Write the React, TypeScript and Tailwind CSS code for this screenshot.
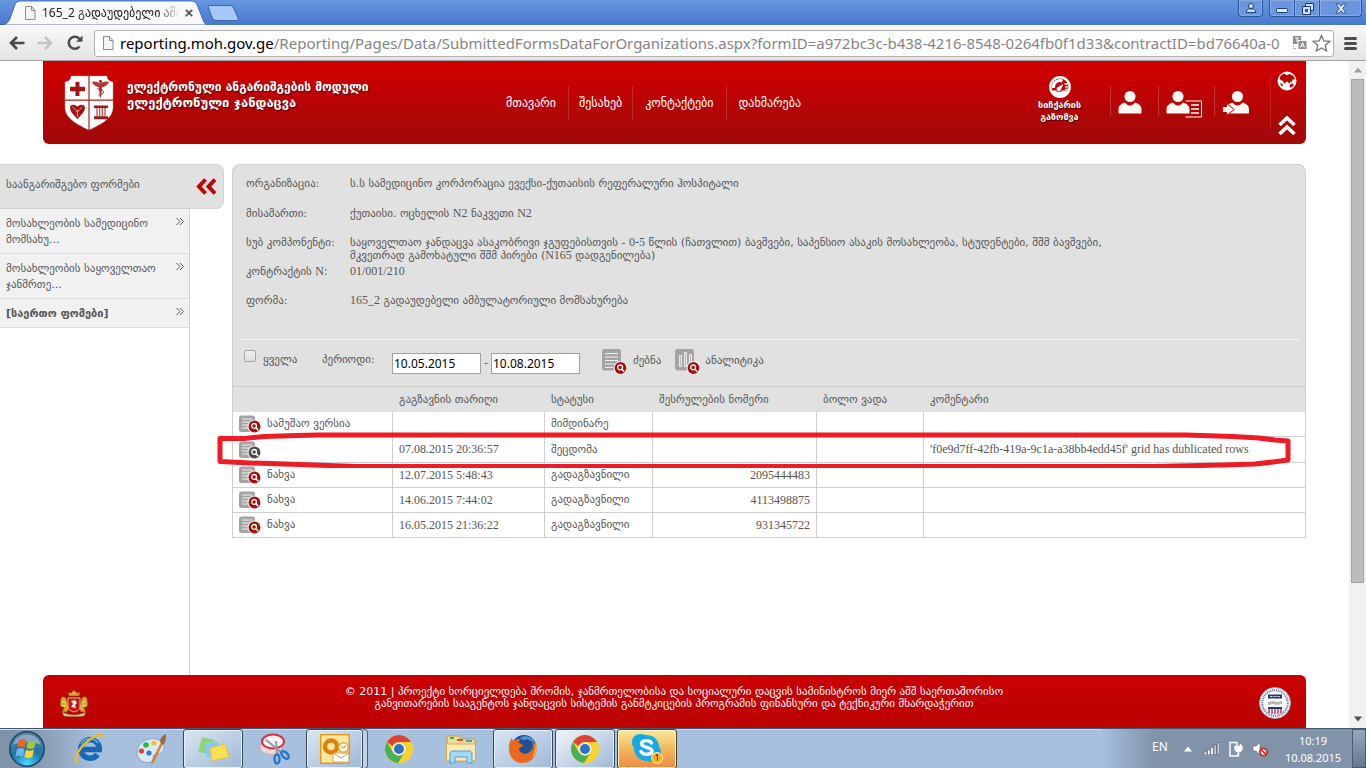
import type { ReactNode } from "react";

/* Latin and numeric runs use the serif face, Georgian uses the sans face. */
function Latin({ children }: { children: ReactNode }) {
  return <span className="font-['Liberation_Serif',serif] text-[12px]">{children}</span>;
}

function PageIcon() {
  return (
    <svg className="h-4 w-3 shrink-0" viewBox="0 0 12 16">
      <path d="M1.5 1.5h6l3.5 4v9H1.5z" fill="#f4f4f4" stroke="#8c8c8c" />
      <path d="M7.5 1.5v4H11" fill="none" stroke="#8c8c8c" />
    </svg>
  );
}

function WindowButtons() {
  const box = "flex h-[17px] items-center justify-center border-x border-b border-[#2f5597] bg-[#6a97dd] shadow-[inset_0_0_0_1px_#86abe4]";
  return (
    <div className="flex self-start">
      <button aria-label="User" className={`${box} mr-1.5 w-[25px] rounded-b`}>
        <svg className="h-3 w-3" viewBox="0 0 12 12" fill="#cfe0f8" stroke="#1f3b6d">
          <path d="M1.5 10.5v-2l2-1.5h5l2 1.500v2z" />
          <circle cx="6" cy="4" r="2.500" />
        </svg>
      </button>
      <button aria-label="Minimize" className={`${box} w-[26px] rounded-bl`}>
        <svg className="h-3 w-3" viewBox="0 0 12 12">
          <rect x="0.5" y="6.500" width="11" height="4" rx="1" fill="#dbe8fa" stroke="#1f3b6d" />
        </svg>
      </button>
      <button aria-label="Restore" className={`${box} w-[25px] border-l-0`}>
        <svg className="h-[13px] w-[13px]" viewBox="0 0 13 13" fill="#cfe0f8" stroke="#1f3b6d">
          <path d="M4.500 1.500h8v7h-8z" />
          <path d="M1.500 4.500h8v8h-8z" />
          <path d="M4.500 7.500h2v2h-2z" fill="#6a97dd" />
        </svg>
      </button>
      <button aria-label="Close" className={`${box} w-[42px] rounded-br border-l-0`}>
        <svg className="h-[11px] w-3" viewBox="0 0 12 11">
          <path d="M1 .8h3l2 2.500 2-2.500h3L7.800 5.500 11 10.200H8L6 7.700l-2 2.500H1l3.200-4.700z" fill="#dbe8fa" stroke="#1f3b6d" strokeWidth=".8" />
        </svg>
      </button>
    </div>
  );
}

function BrowserChrome() {
  return (
    <header className="shrink-0">
      <div className="flex h-[25px] items-end bg-linear-to-b from-[#6797e0] to-[#4878cd] pr-1">
        <div className="relative h-[25px] w-[207px] shrink-0">
          <svg className="absolute inset-0 h-full w-full" viewBox="0 0 210 25" preserveAspectRatio="none">
            <path d="M0 25c6 0 8-2 10-6l5-14c1.500-3 3-4 6-4h173c3 0 4.500 1 6 4l6 15c1 3 2 4 4 5z" fill="#f9f9f9" stroke="#35599d" strokeWidth=".8" />
          </svg>
          <div className="relative flex h-full items-center gap-1.5 pr-3.5 pl-6">
            <PageIcon />
            <span className="w-[137px] overflow-hidden font-['Noto_Sans','DejaVu_Sans',sans-serif] text-[12px] whitespace-nowrap text-[#222] [mask-image:linear-gradient(to_right,black_85%,transparent)]">
              165_2 გადაუდებელი ამბულატორიული
            </span>
            <button aria-label="Close tab" className="ml-auto">
              <svg className="h-2 w-2" viewBox="0 0 8 8" stroke="#555" strokeWidth="1.800">
                <path d="M.8.8l6.400 6.400M7.200.8L.8 7.200" />
              </svg>
            </button>
          </div>
        </div>
        <button aria-label="New tab" className="mb-1 flex">
          <svg className="h-4 w-[32px]" viewBox="0 0 31 16" preserveAspectRatio="none">
            <path d="M1 1.500C1 .8 2 .5 3 .5h19c2 0 3 .5 3.800 2l4.500 11c.4 1.200 0 2-1.300 2H9c-2 0-3-.5-3.800-2z" fill="#a6c8f6" stroke="#3b66ae" />
          </svg>
        </button>
        <div className="flex-1" />
        <WindowButtons />
      </div>
      <div className="flex h-9 items-center border-t border-b border-t-[#fbfbfb] border-b-[#a3a3a3] bg-linear-to-b from-[#f8f8f8] to-[#e4e4e4] px-[9px]">
        <button aria-label="Back" className="w-7">
          <svg className="h-3.5 w-4" viewBox="0 0 16 14" fill="none" stroke="#484848" strokeWidth="2.600">
            <path d="M8 1L2 7l6 6M2 7h13.500" />
          </svg>
        </button>
        <button aria-label="Forward" className="w-[30px]">
          <svg className="h-3.5 w-4" viewBox="0 0 16 14" fill="none" stroke="#c4c4c4" strokeWidth="2.600">
            <path d="M8 1l6 6-6 6M14 7H.5" />
          </svg>
        </button>
        <button aria-label="Reload" className="w-[27px]">
          <svg className="h-4 w-4" viewBox="0 0 16 16">
            <path d="M12.500 11.500a6 6 0 1 1 0-7.500" fill="none" stroke="#4d4d4d" strokeWidth="2.600" />
            <path d="M9 6.800h6.500V.5z" fill="#4d4d4d" />
          </svg>
        </button>
        <div className="flex h-[27px] min-w-0 flex-1 items-center gap-1.5 rounded-[3px] border border-[#b1b1b1] bg-white pr-0.5 pl-[7px]">
          <PageIcon />
          <div role="textbox" aria-label="Address" className="min-w-0 flex-1 overflow-hidden font-['Noto_Sans',sans-serif] text-[15px] leading-5 whitespace-nowrap text-[#858585]">
            <span className="text-black">reporting.moh.gov.ge</span>
            /Reporting/Pages/Data/SubmittedFormsDataForOrganizations.aspx?formID=a972bc3c-b438-4216-8548-0264fb0f1d33&amp;contractID=bd76640a-0
          </div>
          <div className="flex items-center gap-1">
            <button aria-label="Translate">
              <svg className="h-4 w-4" viewBox="0 0 16 16">
                <path d="M1 1h8v8H1z" fill="#8e8e8e" />
                <path d="M3 3h4M5 3v4" stroke="#fff" />
                <path d="M6 5.500h9v9H6z" fill="#8e8e8e" stroke="#fff" />
                <path d="M8.500 12.500l2-5 2 5M9.200 11h2.600" stroke="#fff" fill="none" />
                <path d="M1.500 11v2.500H4" stroke="#8e8e8e" fill="none" strokeDasharray="1 1" />
              </svg>
            </button>
            <button aria-label="Bookmark">
              <svg className="h-[19px] w-[19px]" viewBox="0 0 19 19">
                <path d="M9.500 1.500l2.300 5.400 5.900.5-4.500 3.800 1.400 5.800-5.100-3.100L4.400 17l1.400-5.800L1.300 7.400l5.900-.5z" fill="#fff" stroke="#777" strokeWidth="1.300" />
              </svg>
            </button>
          </div>
        </div>
        <button aria-label="Menu" className="ml-2.5 flex flex-col gap-0.5">
          <span className="h-[3px] w-[13px] rounded-sm bg-[#4d4d4d]" />
          <span className="h-[3px] w-[13px] rounded-sm bg-[#4d4d4d]" />
          <span className="h-[3px] w-[13px] rounded-sm bg-[#4d4d4d]" />
        </button>
      </div>
    </header>
  );
}

function Shield() {
  return (
    <svg className="h-[56px] w-[50px]" viewBox="0 0 50 57" preserveAspectRatio="none">
      <path d="M7 1h36c0 3.500 2 5.500 6 6v26c0 11-12 17-24 23C13 50 1 44 1 33V7c4-.5 6-2.500 6-6z" fill="#fff" stroke="#9b9b9b" strokeOpacity=".5" />
      <path d="M25 1v55M1 25.500h48" stroke="#b02020" strokeWidth="1.200" />
      <path d="M11.500 7h4v5h5.500v4.500h-5.500v5h-4v-5H6V12h5.500z" fill="#a31515" />
      <path d="M28 7c3-1 6 0 8 1.500C38.500 7 41.500 6 45 7c-1.500 3.500-4.500 5-6.800 5.500L37 23h-1l-1.200-10.500C32.500 12 29.500 10.500 28 7z" fill="#b23a3a" />
      <path d="M33.500 13.500c1.500 2.500 6 1.500 6 4s-5 1.500-4.500 3.500" fill="none" stroke="#a31515" />
      <circle cx="36.500" cy="6.500" r="1.500" fill="#a31515" />
      <path d="M6 33c0-3 4.500-3.500 7.500-1 3-2.500 7.500-2 7.500 1 0 4-4 8-7.500 12C10 41 6 37 6 33z" fill="#a31515" />
      <path d="M8.500 32l5 6 5-6M13.500 35v8" fill="none" stroke="#e8b9b9" strokeWidth=".7" />
      <path d="M30 31h14v2.500H30zM30 42h14v3H30z" fill="#a31515" />
      <path d="M33 33.500v9M35.700 33.500v9M38.300 33.500v9M41 33.500v9" stroke="#b84040" strokeWidth="1.200" />
    </svg>
  );
}

function Person() {
  return (
    <>
      <circle cx="12" cy="5.500" r="5.500" fill="#fff9f5" />
      <path d="M.5 22.500v-4c0-4 3-6 6.500-7 1.500 2 3 3 5 3s3.500-1 5-3c3.500 1 6.500 3 6.500 7v4z" fill="#fff9f5" />
    </>
  );
}

const navLink = "flex h-[34px] items-center border-r border-white/15";
const shadow = "[text-shadow:1px_1px_1px_rgba(0,0,0,0.6)]";

function SiteHeader() {
  return (
    <header className="mx-[43px] flex h-[83px] shrink-0 rounded-b-md bg-linear-to-b from-[#cb0000] from-15% to-[#a40808] to-90% pl-[21px] text-white">
      <div className="pt-3.5">
        <Shield />
      </div>
      <div className={`w-[380px] pt-[19px] pl-[13px] text-[12px] leading-[15px] font-bold ${shadow}`}>
        <h1>ელექტრონული ანგარიშგების მოდული</h1>
        <p className="text-[13px]">ელექტრონული ჯანდაცვა</p>
      </div>
      <nav className="flex items-center text-[12px]">
        <a href="#main" className={`${navLink} px-3`}>მთავარი</a>
        <a href="#about" className={`${navLink} px-2.5`}>შესახებ</a>
        <a href="#contacts" className={`${navLink} px-3`}>კონტაქტები</a>
        <a href="#help" className="flex h-[34px] items-center px-3">დახმარება</a>
      </nav>
      <div className="flex flex-1 justify-end">
        <a href="#speed" className={`mt-[15px] mr-[29px] flex flex-col items-center text-center text-[9px] leading-[12px] font-bold ${shadow}`}>
          <svg className="mb-px h-[22px] w-[22px]" viewBox="0 0 22 22">
            <circle cx="11" cy="11" r="9.700" fill="#b90707" stroke="#fff" strokeWidth="2.400" />
            <path d="M4.500 12a6.500 6.500 0 0 1 9-7" fill="none" stroke="#fff" strokeWidth="3" />
            <path d="M15.500 8h3.500M16 10.800h3.500M16 13.500h3" stroke="#fff" strokeWidth="1.300" />
            <path d="M14.500 8l-3 6.500a2.200 2.200 0 1 1-3.200-3z" fill="#fff" />
            <path d="M2 14.500h5c1 2 5 2 6 0h7c-1.500 4.500-5 6.500-9 6.500s-7.500-2-9-6.500z" fill="#fff" />
          </svg>
          <span>სიჩქარის</span>
          <span>გაზომვა</span>
        </a>
        <div className="mt-[25px] flex h-[30px] text-white">
          <a href="#user" aria-label="User" className="flex h-full w-12 items-end border-l border-white/20 pb-[2px] pl-[7px]">
            <svg className="h-[23px] w-6" viewBox="0 0 24 23"><Person /></svg>
          </a>
          <a href="#profile" aria-label="Profile" className="flex h-full w-14 items-end border-l border-white/20 pl-[7px]">
            <svg className="-mb-0.5 h-[27px] w-9" viewBox="0 0 36 27">
              <Person />
              <path d="M19 9.500h17v17H19.500l6-4v-9z" fill="#ae0606" />
              <path d="M19.500 10h16v16h-16" fill="none" stroke="#fff9f5" />
              <path d="M25 14h8M25 18h8M25 22h8" stroke="#fff9f5" strokeWidth="1.300" />
            </svg>
          </a>
          <a href="#logout" aria-label="Log out" className="flex h-full w-14 items-end border-l border-white/20 pl-[7px]">
            <svg className="h-[25px] w-7" viewBox="0 0 28 25">
              <g transform="translate(3.500 0)"><Person /></g>
              <path d="M.7 15.500h4v-3.200l7.500 6.200-7.500 6v-3h-4z" fill="#fff9f5" stroke="#ae0606" />
            </svg>
          </a>
        </div>
        <div className="my-3.5 flex w-9 flex-col items-center justify-between border-l border-white/10 pr-1">
          <a href="#language" aria-label="Language" className="-mt-1">
            <svg className="h-5 w-5" viewBox="0 0 20 20">
              <circle cx="10" cy="10" r="9" fill="#fff" stroke="#fff" />
              <path d="M2.500 6.500L5 3.500l3-.7 1.500 1.500 3-1.300 4 2 1.500 3-2.500.8-.5 2.200-1.800-.5-.7 2.500-2-2.500-2 1-1.500 1.500-.8-3L3.500 9zM13 13.500l2.500-1 1.500 1.500-2.500 2.500-2-.5zM3 12l2.500 1 .5 2.500-2-1z" fill="#b80606" />
            </svg>
          </a>
          <button aria-label="Collapse header" className="-mb-[5px]">
            <svg className="h-5 w-[18px]" viewBox="0 0 18 20" fill="none" stroke="#fff" strokeWidth="3.600">
              <path d="M1.500 10L9 3l7.500 7M1.500 19L9 12l7.500 7" />
            </svg>
          </button>
        </div>
      </div>
    </header>
  );
}

const menuItems = [
  { text: "მოსახლეობის სამედიცინო მომსახუ...", bold: false },
  { text: "მოსახლეობის საყოველთაო ჯანმრთე...", bold: false },
  { text: "[საერთო ფომები]", bold: true },
];

function Sidebar() {
  return (
    <aside className="w-[224px] shrink-0">
      <div className="flex h-[45px] items-center justify-between rounded-r-lg border border-l-0 border-[#d2d2d2] bg-[#e1e1e1] pr-1.5 pb-0.5 pl-1.5">
        <span>საანგარიშგებო ფორმები</span>
        <button aria-label="Collapse menu" className="mt-0.5">
          <svg className="h-[17px] w-[22px]" viewBox="0 0 22 17" fill="none" stroke="#b80808" strokeWidth="4">
            <path d="M10.500 1.500L4 8.500l6.500 7M20 1.500l-6.500 7 6.500 7" />
          </svg>
        </button>
      </div>
      <ul className="w-[190px] border-r border-[#d0d0d0]">
        {menuItems.map((item) => (
          <li key={item.text} className="border-b border-[#dcdcdc] bg-[#f1f1f1]">
            <a href="#form" className="flex items-start justify-between pt-[7px] pr-[5px] pb-[5px] pl-1.5 leading-4">
              <span className={item.bold ? "font-bold" : "max-w-[160px]"}>{item.text}</span>
              <svg className="mt-px h-[9px] w-2" viewBox="0 0 8 9" fill="none" stroke="#555">
                <path d="M.5 1L4 4.500.5 8M4 1l3.500 3.500L4 8" />
              </svg>
            </a>
          </li>
        ))}
      </ul>
    </aside>
  );
}

function Magnifier({ color }: { color: string }) {
  return (
    <>
      <circle cx="6" cy="6" r="7" fill="#fff" fillOpacity=".85" />
      <circle cx="6" cy="6" r="5.900" fill={color} />
      <circle cx="5.600" cy="5.400" r="2.400" fill="none" stroke="#fff" strokeWidth="1.300" />
      <path d="M7.300 7.300l2.500 2.500" stroke="#fff" strokeWidth="1.600" />
    </>
  );
}

function RowIcon({ color }: { color: string }) {
  return (
    <svg className="h-[18px] w-[22px] shrink-0" viewBox="0 0 22 18">
      <rect y="0.5" width="16" height="16.500" rx="2.500" fill="#a4a4a4" />
      <path d="M3 4h10M3 7h8M3 10h6M3 13h6" stroke="#f0f0f0" strokeWidth="1.200" />
      <g transform="translate(9.500 5.500)"><Magnifier color={color} /></g>
    </svg>
  );
}

function SearchIcon() {
  return (
    <svg className="h-[25px] w-[25px]" viewBox="0 0 25 25">
      <rect width="19" height="21.500" rx="2.500" fill="#a4a4a4" />
      <path d="M3 4.500h13M3 8h13M3 11.500h13M3 15h9M3 18.500h8" stroke="#f0f0f0" strokeWidth="1.100" />
      <g transform="translate(12.500 13)"><Magnifier color="#a90d0d" /></g>
    </svg>
  );
}

function ChartIcon() {
  return (
    <svg className="h-[25px] w-[25px]" viewBox="0 0 25 25">
      <rect width="19" height="21.500" rx="2.500" fill="#a4a4a4" />
      <path d="M4.500 6.500h2v11h-2zM9.500 3.500h2v14h-2zM14.500 5.500h2v8h-2z" fill="#b8b8b8" stroke="#ececec" />
      <g transform="translate(12.500 13)"><Magnifier color="#a90d0d" /></g>
    </svg>
  );
}

const details: { label: ReactNode; value: ReactNode }[] = [
  { label: "ორგანიზაცია:", value: "ს.ს სამედიცინო კორპორაცია ევექსი-ქუთაისის რეფერალური ჰოსპიტალი" },
  { label: "მისამართი:", value: <>ქუთაისი. ოცხელის <Latin>N2</Latin> ნაკვეთი <Latin>N2</Latin></> },
  {
    label: "სუბ კომპონენტი:",
    value: (
      <>
        საყოველთაო ჯანდაცვა ასაკობრივი ჯგუფებისთვის - <Latin>0-5</Latin> წლის (ჩათვლით) ბავშვები, საპენსიო ასაკის
        მოსახლეობა, სტუდენტები, შშმ ბავშვები, მკვეთრად გამოხატული შშმ პირები (<Latin>N165</Latin> დადგენილება)
      </>
    ),
  },
  { label: <>კონტრაქტის <Latin>N:</Latin></>, value: <Latin>01/001/210</Latin> },
  { label: "ფორმა:", value: <><Latin>165_2</Latin> გადაუდებელი ამბულატორიული მომსახურება</> },
];

const rows = [
  { view: "სამუშაო ვერსია", date: "", status: "მიმდინარე", id: "", comment: "", failed: false },
  { view: "", date: "07.08.2015 20:36:57", status: "შეცდომა", id: "", comment: "'f0e9d7ff-42fb-419a-9c1a-a38bb4edd45f' grid has dublicated rows", failed: true },
  { view: "ნახვა", date: "12.07.2015 5:48:43", status: "გადაგზავნილი", id: "2095444483", comment: "", failed: false },
  { view: "ნახვა", date: "14.06.2015 7:44:02", status: "გადაგზავნილი", id: "4113498875", comment: "", failed: false },
  { view: "ნახვა", date: "16.05.2015 21:36:22", status: "გადაგზავნილი", id: "931345722", comment: "", failed: false },
];

const cell = "border-r border-[#cfcfcf] px-1.5 last:border-r-0";
const dateInput = "h-[21px] w-[89px] border border-[#a0a0a0] bg-white px-px font-['Noto_Sans',sans-serif] text-[12px] text-black";

function Panel() {
  return (
    <main className="min-w-0 flex-1">
      <section className="rounded-t-lg border border-b-0 border-[#cfcfcf] bg-[#e1e1e1] px-[5px]">
        <dl className="h-[174px] pt-[5px]">
          {details.map((d, i) => (
            <div key={i} className="flex h-[29px] items-baseline pt-2 pl-2 leading-3">
              <dt className="w-[104px] shrink-0 whitespace-nowrap">{d.label}</dt>
              <dd className="max-w-[800px]">{d.value}</dd>
            </div>
          ))}
        </dl>
        <form className="flex h-[47px] items-center border-t border-[#f4f4f4] pl-1.5" onSubmit={(e) => e.preventDefault()}>
          <label className="flex w-[78px] items-center gap-[7px] pb-1.5">
            <input type="checkbox" className="mb-2 h-3 w-3 appearance-none rounded-[2px] border border-[#a5a5a5] bg-linear-to-b from-[#f2f2f2] to-[#dcdcdc]" />
            ყველა
          </label>
          <label htmlFor="from" className="w-[70px] pb-1.5">პერიოდი:</label>
          <input id="from" type="text" defaultValue="10.05.2015" className={dateInput} />
          <span className="w-2.5 text-center">-</span>
          <input aria-label="to" type="text" defaultValue="10.08.2015" className={dateInput} />
          <button className="ml-[22px] flex items-center gap-1.5 pb-[3px]">
            <SearchIcon />
            ძებნა
          </button>
          <button className="ml-3.5 flex items-center gap-[5px] pb-[3px]">
            <ChartIcon />
            ანალიტიკა
          </button>
        </form>
      </section>
      <div className="relative">
        <table className="w-full table-fixed border-separate border-spacing-0 border-x border-[#cfcfcf] text-left">
          <colgroup>
            <col className="w-[160px]" />
            <col className="w-[152px]" />
            <col className="w-[108px]" />
            <col className="w-[164px]" />
            <col className="w-[107px]" />
            <col />
          </colgroup>
          <thead>
            <tr className="h-[26px] bg-[#e1e1e1]">
              {["", "გაგზავნის თარიღი", "სტატუსი", "შესრულების ნომერი", "ბოლო ვადა", "კომენტარი"].map((h, i) => (
                <th key={i} className="border-t border-[#cfcfcf] px-1.5 pt-0.5 font-normal">{h}</th>
              ))}
            </tr>
          </thead>
          <tbody>
            {rows.map((r, i) => (
              <tr key={i} className={`${r.failed ? "h-[26px]" : "h-[25px]"} bg-white [&>td]:border-b`}>
                <td className={cell}>
                  <a href="#view" className="flex items-center gap-[6px]">
                    <RowIcon color={r.failed ? "#4a4a4a" : "#a90d0d"} />
                    {r.view}
                  </a>
                </td>
                <td className={cell}><Latin>{r.date}</Latin></td>
                <td className={`${cell} pt-px`}>{r.status}</td>
                <td className={`${cell} text-right`}><Latin>{r.id}</Latin></td>
                <td className={cell} />
                <td className={cell}><Latin>{r.comment}</Latin></td>
              </tr>
            ))}
          </tbody>
        </table>
        {/* Hand-drawn marker around the failed submission */}
        <svg className="pointer-events-none absolute top-[46px] -left-4 h-9 w-[calc(100%+2px)]" viewBox="0 0 1076 36" preserveAspectRatio="none" fill="none" stroke="#ee1c24" strokeWidth="5" strokeLinejoin="round">
          <path d="M4 30V6.500h24l20-2 34-1 20-.5h867l48 1.500 26 1.500 16 2 13 1v19l-15 2-18 2-32 1-70 1.500H140l-56-2-50-1.500-30-1.500V28" />
        </svg>
      </div>
    </main>
  );
}

function SiteFooter() {
  return (
    <footer className="mx-[43px] flex h-[53px] shrink-0 items-start justify-between rounded-t-md bg-linear-to-b from-[#c90000] to-[#bb0202] pr-[15px] pl-4 text-white">
      <svg className="mt-[14px] h-7 w-[30px]" viewBox="0 0 30 28">
        <path d="M2 9c3-3 6 0 6 4l2 6-2 4H3l2-4-4-3zM28 9c-3-3-6 0-6 4l-2 6 2 4h5l-2-4 4-3z" fill="#d9a62e" stroke="#7c4a10" strokeWidth=".7" />
        <path d="M3 12l4 2M2 17l5-1M27 12l-4 2M28 17l-5-1" stroke="#f2dd8d" />
        <path d="M9 9h12v9c0 3-3 4-6 5-3-1-6-2-6-5z" fill="#c41414" stroke="#e3c06c" />
        <path d="M12 18l2-3-2-3 4-1 2 3-2 2 1 3z" fill="#e8e8e8" />
        <path d="M10 7l-1-4 3 1 3-3 3 3 3-1-1 4z" fill="#d4a531" stroke="#7c4a10" strokeWidth=".6" />
        <path d="M3 23c8 4 16 4 24 0l-2 4c-6 1-14 1-20 0z" fill="#e1d6b0" stroke="#8c6426" strokeWidth=".7" />
      </svg>
      <p className="pt-[11px] text-center text-[11px] leading-3">
        © 2011 | პროექტი ხორციელდება შრომის, ჯანმრთელობისა და სოციალური დაცვის სამინისტროს მიერ აშშ საერთაშორისო
        <br />
        განვითარების სააგენტოს ჯანდაცვის სისტემის განმტკიცების პროგრამის ფინანსური და ტექნიკური მხარდაჭერით
      </p>
      <svg className="mt-3 h-8 w-8" viewBox="0 0 32 32">
        <circle cx="16" cy="16" r="15.500" fill="#f4f6fa" stroke="#9eafc6" />
        <circle cx="16" cy="16" r="12.800" fill="none" stroke="#5d779f" strokeWidth="2" strokeDasharray="1 .9" />
        <circle cx="16" cy="16" r="11" fill="#fff" />
        <path d="M9 7.500h14v4H9z" fill="#1f3a74" />
        <path d="M11 9.500h10" stroke="#cdd7ea" strokeDasharray="2 .7" />
        <path d="M9 15l5-1 4 1 5-1v3l-5 1-4-1-5 1z" fill="#b7b7b7" />
        <path d="M9 20h14v2H9z" fill="#1f3a74" />
        <path d="M10 22v4M13 22v5M16 22v5M19 22v5M22 22v4" stroke="#c33045" strokeWidth="1.500" />
      </svg>
    </footer>
  );
}

function ChromeLogo() {
  return (
    <svg className="h-[30px] w-[30px]" viewBox="0 0 30 30">
      <circle cx="15" cy="15" r="14" fill="#fbd12f" />
      <path d="M2.900 8A14 14 0 0 1 27.100 8H15a7 7 0 0 0-6.500 4z" fill="#de4236" />
      <path d="M2.900 8A14 14 0 0 0 14 29l6.500-10.500A7 7 0 0 1 9 18.500z" fill="#4caf50" />
      <circle cx="15" cy="15" r="6.500" fill="#f3f3f3" />
      <circle cx="15" cy="15" r="5" fill="#2f72c4" />
    </svg>
  );
}

const taskSlot = "flex h-full w-[62px] items-center justify-center";
const openTask = "flex h-10 w-[60px] items-center justify-center rounded-[3px] border border-[#34495f] bg-linear-to-br from-[#dbe6f3] to-[#9fb8d6] shadow-[inset_0_0_0_1px_#e6eef8]";

function Taskbar() {
  return (
    <footer className="flex h-10 shrink-0 items-center border-t border-[#43566c] bg-linear-to-r from-[#8193a9] from-2% via-[#a6c0de] via-7% to-[#a6c0de] shadow-[inset_0_1px_0_#d3deea]">
      <button aria-label="Start" className="flex w-[58px] justify-center pr-1">
        <svg className="h-9 w-9" viewBox="0 0 36 36">
          <defs>
            <radialGradient id="orb" cx=".5" cy=".95" r=".9">
              <stop offset="0" stopColor="#4fdcff" />
              <stop offset=".5" stopColor="#1b75ad" />
              <stop offset="1" stopColor="#5b7f9e" />
            </radialGradient>
          </defs>
          <circle cx="18" cy="18" r="17.200" fill="url(#orb)" stroke="#1e4666" strokeWidth="1.500" />
          <path d="M4 14c4-14 24-14 28 0-8-4-20-4-28 0z" fill="#fff" opacity=".35" />
          <path d="M10 9c3-1.500 5-1.500 7.500 0l-1.600 7.500c-2.500-1.500-5-1.500-7.500 0z" fill="#ed6527" />
          <path d="M19 9.700c3 1.300 5 1.200 8-.2l-1.700 7.500c-3 1.300-5 1.300-8 0z" fill="#9bc83c" />
          <path d="M8 18.200c3-1.500 5-1.500 7.500 0l-1.600 7.300c-2.500-1.500-5-1.500-7.500 0z" fill="#6fb6ee" />
          <path d="M17 18.800c3 1.300 5 1.200 8-.2l-1.700 7.400c-3 1.300-5 1.300-8 0z" fill="#fbd03b" />
        </svg>
      </button>
      <button aria-label="Internet Explorer" className={taskSlot}>
        <svg className="h-8 w-8" viewBox="0 0 32 32" fill="none">
          <path d="M24.500 21.500a9.300 9.300 0 1 1 1.800-5H9" stroke="#1769b5" strokeWidth="5.500" />
          <path d="M8 11a10 10 0 0 1 17-1" stroke="#5ab4ec" strokeWidth="1.500" />
          <path d="M5 30c-6-3 1-15 10-22S31-1 30.500 5" stroke="#f2b824" strokeWidth="2.400" />
        </svg>
      </button>
      <button aria-label="Paint" className={taskSlot}>
        <svg className="h-8 w-8" viewBox="0 0 32 32">
          <path d="M2 20C2 10 12 4 21 6c8 2 10 9 6 13-3 3-6 1-8 3s1 5-3 7c-5 2-14-1-14-9z" fill="#d8e9f6" stroke="#88a8c4" />
          <circle cx="11" cy="12" r="2.800" fill="#37b34a" />
          <circle cx="19" cy="10" r="2.600" fill="#f5c01e" />
          <circle cx="6.500" cy="18" r="2.600" fill="#e33c2e" />
          <circle cx="14" cy="20" r="2.600" fill="#3a78d0" />
          <path d="M17 30L27 10" stroke="#d58129" strokeWidth="2.500" />
          <path d="M25 9c0-4 3-7 6-8 0 4 0 8-3 11z" fill="#a5683d" />
        </svg>
      </button>
      <div className={taskSlot}>
        <button aria-label="Sticky Notes" className={openTask}>
          <svg className="h-[26px] w-8" viewBox="0 0 32 26">
            <path d="M5 1l13 3-5 14-12-2z" fill="#8ed57c" />
            <path d="M9 7l12-1 1 14-13 1z" fill="#8cc6f3" />
            <path d="M13 12l15-4 4 13-17 4z" fill="#f8e052" stroke="#dcb92d" strokeWidth=".7" />
          </svg>
        </button>
      </div>
      <button aria-label="Snipping Tool" className={taskSlot}>
        <svg className="h-8 w-8" viewBox="0 0 32 32" fill="none">
          <ellipse cx="12" cy="14" rx="11" ry="7.500" fill="#f2d7dc" stroke="#e2a4ac" />
          <ellipse cx="14" cy="8.500" rx="11" ry="7" fill="#f8f4f6" stroke="#d6333e" strokeWidth="2" />
          <path d="M7 7l16 13M17 8l1 14" stroke="#8e9aa8" strokeWidth="2" />
          <ellipse cx="18" cy="26" rx="2.500" ry="4.500" stroke="#2579c7" strokeWidth="2.500" />
          <ellipse cx="26" cy="22" rx="2.500" ry="4.500" transform="rotate(-45 26 22)" stroke="#2579c7" strokeWidth="2.500" />
        </svg>
      </button>
      <div className="flex h-full w-[62px] items-center">
        <button aria-label="Outlook" className={`${openTask} w-[55px]`}>
          <svg className="h-[30px] w-[30px]" viewBox="0 0 30 30">
            <rect x=".7" y=".7" width="28.600" height="28.600" fill="#fbe7a0" stroke="#e49a12" strokeWidth="1.500" />
            <circle cx="11" cy="12.500" r="6" fill="none" stroke="#d9820c" strokeWidth="4.500" />
            <path d="M13 19h16v9H13z" fill="#fdfdfd" stroke="#d6a64a" />
            <path d="M13 19l8 5 8-5" fill="none" stroke="#c9a35a" />
            <circle cx="23.500" cy="13.500" r="4.800" fill="#fffbe9" stroke="#e8a72b" strokeWidth="1.500" />
            <path d="M21.500 12l2 2 2.500-2" fill="none" stroke="#b4811d" />
          </svg>
        </button>
        <span className="h-10 w-[5px] rounded-r border border-l-0 border-[#4d6178] bg-[#c1d2e6]" />
      </div>
      <button aria-label="Chrome" className={taskSlot}>
        <ChromeLogo />
      </button>
      <button aria-label="Explorer" className={taskSlot}>
        <svg className="h-[30px] w-8" viewBox="0 0 32 30">
          <path d="M2 2h12l2 3h14v22H2z" fill="#f0dc94" stroke="#c2a04a" />
          <path d="M5 3h4v2H5z" fill="#2dbb49" /><path d="M12 5h6v2h-6z" fill="#dd5530" /><path d="M21 6h6v2h-6z" fill="#3d9cd8" />
          <path d="M1.500 10h29v17h-29z" fill="#f8eab2" stroke="#cfae5a" />
          <path d="M5 29V20c0-2 1-3 3-3h16c2 0 3 1 3 3v9h-5v-6H10v6z" fill="#a5d9f5" stroke="#4ca0d2" />
        </svg>
      </button>
      <div className={taskSlot}>
        <button aria-label="Firefox" className={openTask}>
          <svg className="h-[30px] w-[30px]" viewBox="0 0 30 30">
            <circle cx="16" cy="13.500" r="12.500" fill="#234f94" />
            <path d="M12 4c5-4 13-1 15 5-4-3-6-2-8-4-2 2-5 1-7-1z" fill="#4b97d6" />
            <path d="M1 12C1 8 3 5 4 4c0 2 1 3 2 3 2-2 4-2 7-2-2 1-3 3-2 4l4 2c0 2-3 2-4 4 0 3 5 6 9 4 5-2 6-7 4-12 4 3 5 8 4 12-2 7-8 10-14 10C6 29 0 22 1 12z" fill="#e96a1d" />
            <path d="M27 6c3 6 2 14-3 18 3-6 4-12 3-18z" fill="#f8ba2c" />
          </svg>
        </button>
      </div>
      <div className={taskSlot}>
        <button aria-label="Chrome window" className={`${openTask} from-[#f2f6fb]`}>
          <ChromeLogo />
        </button>
      </div>
      <div className={taskSlot}>
        <button aria-label="Skype" className="flex h-10 w-[60px] items-center justify-center rounded-[3px] border border-[#4d4028] bg-linear-to-b from-[#f7ea9d] via-[#f3b65d] to-[#ec8a42] shadow-[inset_0_0_0_1px_#fff0c0]">
          <svg className="h-8 w-8" viewBox="0 0 32 32">
            <path d="M9 1c3 0 4 1 6 1 8 0 13 5 13 12 1 2 2 3 2 6 0 5-4 9-9 9-2 0-3-1-5-1C8 28 3 22 3 15 2 13 1 12 1 9c0-5 4-8 8-8z" fill="#14a9e8" />
            <path d="M20.500 10c-2-3.500-10-3-10 .8 0 4.500 10.500 2.500 10.500 7 0 4-8.500 5-11 .7" fill="none" stroke="#fff" strokeWidth="3.400" strokeLinecap="round" />
            <circle cx="26" cy="25" r="5.500" fill="#f9b314" stroke="#fff0b5" />
            <text x="26" y="28" textAnchor="middle" fontSize="8" fontFamily="Noto Sans" fill="#111">1</text>
          </svg>
        </button>
      </div>
      <div className="ml-auto flex h-full items-center bg-linear-to-r from-[#a6c0de] to-[#8193a9] to-20% pl-[50px] font-['Noto_Sans',sans-serif] text-[12px] text-white">
        <span className="w-8 pb-1">EN</span>
        <div className="flex items-center gap-2">
          <svg className="mr-1 h-1.5 w-2" viewBox="0 0 8 5"><path d="M4 0l4 5H0z" fill="#fff" /></svg>
          <svg className="h-[13px] w-4" viewBox="0 0 16 13" stroke="#40506a" strokeWidth=".5" fill="#fff">
            <path d="M.3 10h2.600v2.700H.3zM3.500 8h2.600v4.700H3.500zM6.700 5.500h2.600v7.200H6.700z" />
            <path d="M9.900 3h2.600v9.700H9.900zM13.100.5h2.600v12.200h-2.600z" fill="#c3ccd8" />
          </svg>
          <svg className="h-4 w-4" viewBox="0 0 16 16" fill="none" stroke="#fff" strokeWidth="1.400">
            <path d="M9 3V1.500H2V15h8v-3" />
            <path d="M7 5.500h7v2c0 2-1.500 3-3.500 3S7 9.500 7 7.500zM9 5.500V3M12.500 5.500V3M10.500 10.500V15" fill="#fff" />
          </svg>
          <svg className="h-4 w-4" viewBox="0 0 16 16">
            <path d="M1 5h3l4-4v13l-4-4H1z" fill="#fff" stroke="#56657a" strokeWidth=".6" />
            <circle cx="11.500" cy="11" r="3.600" fill="#fff" stroke="#e02020" strokeWidth="1.800" />
            <path d="M9 8.500l5 5" stroke="#e02020" strokeWidth="1.600" />
          </svg>
        </div>
        <div className="ml-4 w-[58px] text-center text-[11px] leading-[17px]">
          <div>10:19</div>
          <div>10.08.2015</div>
        </div>
        <span className="ml-2.5 h-full w-3.5 border border-[#4c5d73] bg-linear-to-b from-[#97a8bd] to-[#66788f]" />
      </div>
    </footer>
  );
}

export default function App() {
  return (
    <div className="flex min-h-screen flex-col bg-white font-['DejaVu_Sans',sans-serif] text-[11px] text-[#555]">
      <BrowserChrome />
      <div className="flex flex-1">
        <div className="flex min-w-0 flex-1 flex-col">
          <SiteHeader />
          <div className="flex flex-1 gap-2 pt-5 pr-[43px]">
            <div className="flex flex-col">
              <Sidebar />
              <div className="w-[190px] flex-1 border-r border-[#d0d0d0]" />
            </div>
            <Panel />
          </div>
          <SiteFooter />
        </div>
        <div className="flex w-[17px] shrink-0 flex-col items-center bg-[#f1f1f1] px-0.5">
          <svg className="my-1.5 h-1.5 w-2" viewBox="0 0 8 5"><path d="M4 0l4 5H0z" fill="#9d9d9d" /></svg>
          <div className="w-full flex-[505] border border-[#a3a3a3] bg-[#bcbcbc]" />
          <div className="flex-[128]" />
          <svg className="my-1.5 h-1.5 w-2" viewBox="0 0 8 5"><path d="M4 5l4-5H0z" fill="#505050" /></svg>
        </div>
      </div>
      <Taskbar />
    </div>
  );
}
